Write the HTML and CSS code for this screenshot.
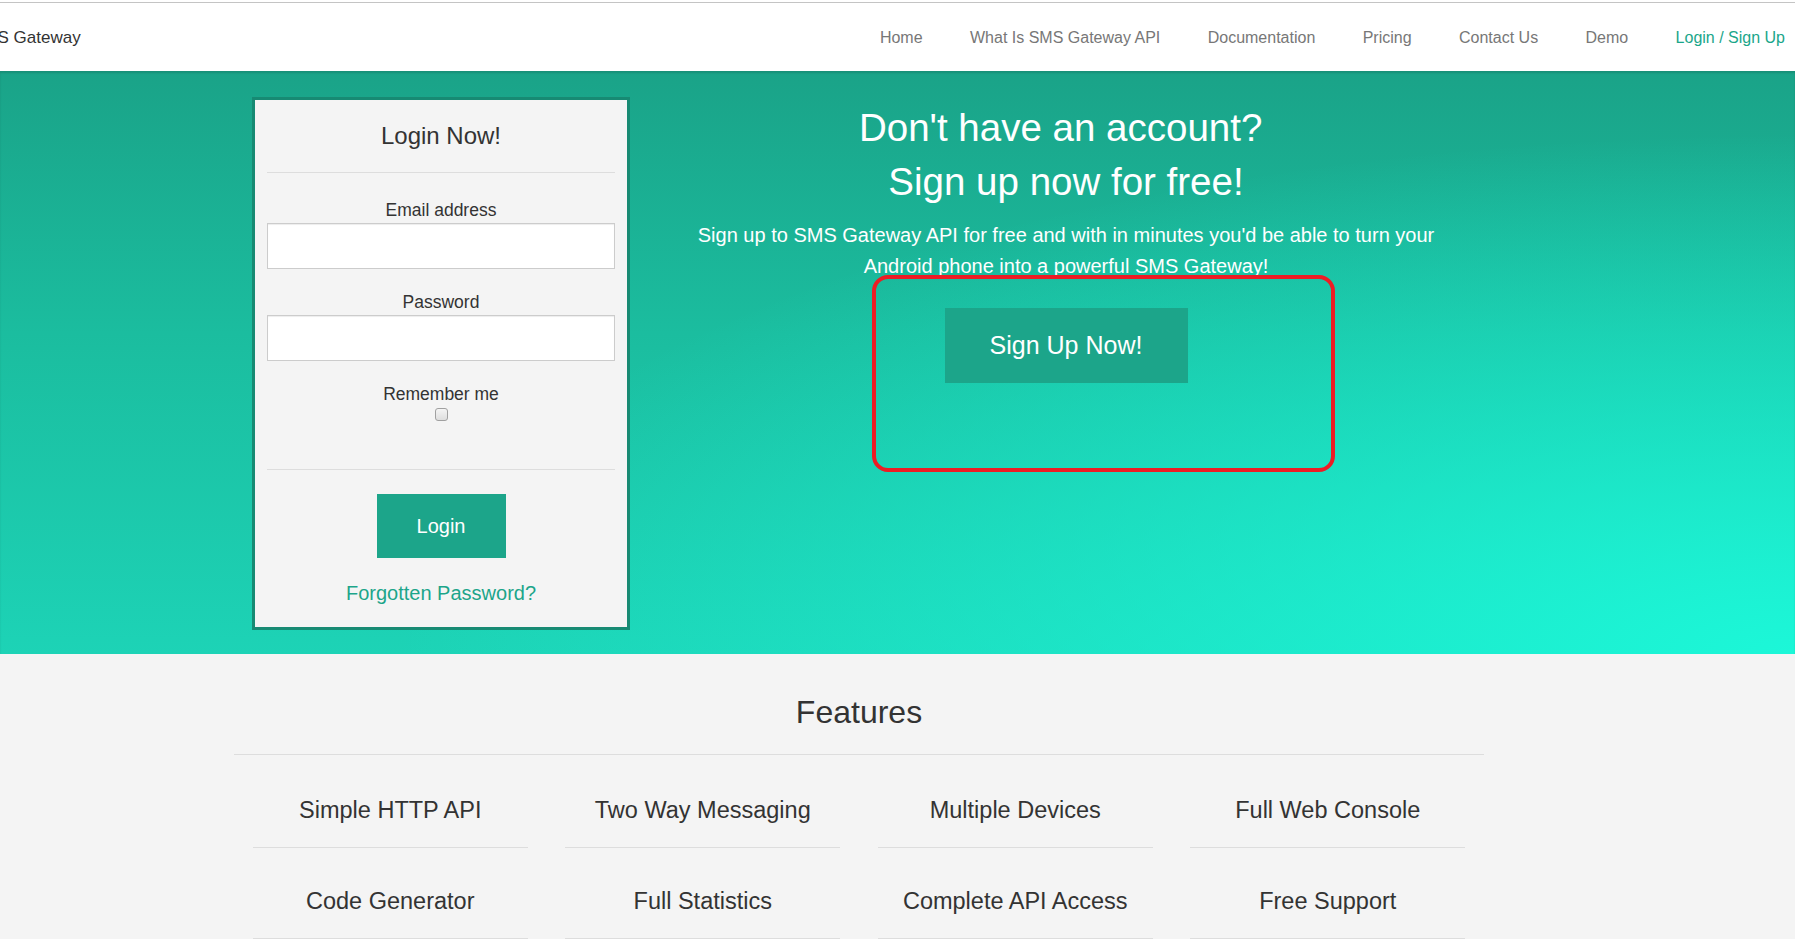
FILE: index.html
```html
<!DOCTYPE html>
<html lang="en">
<head>
<meta charset="utf-8">
<title>SMS Gateway API - Login</title>
<link rel="stylesheet" href="styles.css">
</head>
<body>
<div class="topline"></div>
<header class="navbar">
  <a class="brand" href="#">SMS Gateway</a>
  <nav class="menu">
    <ul class="menu-list">
      <li><a class="menu-link" href="#">Home</a></li>
      <li><a class="menu-link" href="#">What Is SMS Gateway API</a></li>
      <li><a class="menu-link" href="#">Documentation</a></li>
      <li><a class="menu-link" href="#">Pricing</a></li>
      <li><a class="menu-link" href="#">Contact Us</a></li>
      <li><a class="menu-link" href="#">Demo</a></li>
      <li><a class="menu-link active" href="#">Login / Sign Up</a></li>
    </ul>
  </nav>
</header>

<section class="hero">
  <div class="hero-inner">
    <form class="login-card">
      <h3 class="card-title">Login Now!</h3>
      <hr class="card-rule">
      <div class="field first">
        <label class="field-label">Email address</label>
        <input class="text-input" type="email">
      </div>
      <div class="field">
        <label class="field-label">Password</label>
        <input class="text-input" type="password">
      </div>
      <div class="field">
        <label class="field-label">Remember me</label>
        <input class="check" type="checkbox">
      </div>
      <hr class="card-rule lower">
      <button class="btn-login" type="button">Login</button>
      <a class="forgot" href="#">Forgotten Password?</a>
    </form>
    <div class="signup">
      <h1 class="signup-title">Don't have an account?&nbsp;<br>Sign up now for free!</h1>
      <p class="signup-text">Sign up to SMS Gateway API for free and with in minutes you'd be able to turn your Android phone into a powerful SMS Gateway!</p>
      <a class="btn-signup" href="#">Sign Up Now!</a>
    </div>
  </div>
  <div class="annotation"></div>
</section>

<section class="features">
  <div class="container">
    <h2 class="features-title">Features</h2>
    <hr class="features-rule">
    <ul class="feature-grid">
      <li class="feature"><span class="feature-name">Simple HTTP API</span></li>
      <li class="feature"><span class="feature-name">Two Way Messaging</span></li>
      <li class="feature"><span class="feature-name">Multiple Devices</span></li>
      <li class="feature"><span class="feature-name">Full Web Console</span></li>
      <li class="feature"><span class="feature-name">Code Generator</span></li>
      <li class="feature"><span class="feature-name">Full Statistics</span></li>
      <li class="feature"><span class="feature-name">Complete API Access</span></li>
      <li class="feature"><span class="feature-name">Free Support</span></li>
    </ul>
  </div>
</section>
</body>
</html>
```
FILE: styles.css
```css
html, body {
  margin: 0;
  padding: 0;
  overflow: hidden;
}
body {
  font-family: "Liberation Sans", Arial, Helvetica, sans-serif;
  color: #333;
  background: #f4f4f4;
}

.topline {
  height: 2px;
  background: #fff;
}

.navbar {
  box-sizing: border-box;
  height: 69px;
  padding-top: 2px;
  border-top: 1px solid #c4c4c4;
  background: #fff;
  display: flex;
  align-items: center;
}
.brand {
  margin-left: -28px;
  font-size: 17px;
  color: #333;
  text-decoration: none;
  white-space: nowrap;
}
.menu {
  margin-left: auto;
  padding-right: 10px;
}
.menu-list {
  list-style: none;
  margin: 0;
  padding: 0;
  display: flex;
  gap: 47.4px;
}
.menu-link {
  font-size: 16px;
  color: #777;
  text-decoration: none;
  white-space: nowrap;
}
.menu-link.active {
  color: #1aa68a;
}

.hero {
  position: relative;
  padding: 26px 0 24px;
  background:
    radial-gradient(ellipse 1400px 520px at 100% 100%, rgba(28, 247, 216, 1) 0%, rgba(28, 247, 216, 0) 100%),
    linear-gradient(180deg, #1aa388 0%, #1bbd9f 45%, #1dd3b6 100%);
  box-shadow: inset 0 2px 2px rgba(0, 0, 0, 0.12);
}
.hero-inner {
  margin-left: 234px;
  width: 1250px;
  display: flex;
  align-items: flex-start;
}

.login-card {
  box-sizing: border-box;
  width: 378px;
  margin: 0 0 0 18px;
  padding: 22px 12px 22.5px;
  border: 3px solid #178a73;
  background: #f4f4f4;
  text-align: center;
}
.card-title {
  margin: 0;
  font-size: 24px;
  line-height: 28px;
  font-weight: normal;
  color: #333;
}
.card-rule {
  margin: 22px 0 0;
  height: 0;
  border: 0;
  border-top: 1px solid #dddddd;
}
.card-rule.lower {
  margin-top: 48px;
}
.field {
  margin-top: 23px;
}
.field.first {
  margin-top: 27px;
}
.field-label {
  display: block;
  margin-bottom: 2px;
  font-size: 17.5px;
  line-height: 21px;
  color: #333;
}
.text-input {
  display: block;
  box-sizing: border-box;
  width: 100%;
  height: 46px;
  margin: 0;
  border: 1px solid #cccccc;
  background: #fff;
  box-shadow: inset 0 1px 1px rgba(0, 0, 0, 0.075);
}
.check {
  appearance: none;
  -webkit-appearance: none;
  display: block;
  box-sizing: border-box;
  width: 13px;
  height: 13px;
  margin: 3px auto 0;
  border: 1px solid #a0a0a0;
  border-radius: 3px;
  background: linear-gradient(#f4f4f4, #dedede);
}
.btn-login {
  display: block;
  width: 129px;
  height: 64px;
  margin: 24px auto 0;
  border: 0;
  padding: 0;
  background: #1ca58a;
  color: #fff;
  font-family: inherit;
  font-size: 20px;
}
.forgot {
  display: block;
  margin-top: 23.5px;
  font-size: 20px;
  line-height: 23px;
  color: #1ca58a;
  text-decoration: none;
}

.signup {
  flex: 1;
  margin-left: 18px;
  text-align: center;
  color: #fff;
}
.signup-title {
  margin: 3.7px 0 0;
  font-size: 38.5px;
  line-height: 54px;
  font-weight: normal;
}
.signup-text {
  max-width: 780px;
  margin: 11px auto 0;
  font-size: 20px;
  line-height: 31px;
}
.btn-signup {
  display: block;
  width: 243px;
  height: 75px;
  margin: 26.4px auto 0;
  background: #1ca58a;
  color: #fff;
  font-size: 25px;
  line-height: 75px;
  text-decoration: none;
}

.annotation {
  position: absolute;
  left: 872px;
  top: 204px;
  box-sizing: border-box;
  width: 463px;
  height: 197px;
  border: 4px solid #ed1c24;
  border-radius: 16px;
}

.features {
  padding-top: 40px;
  background: #f4f4f4;
}
.container {
  margin-left: 234px;
  width: 1250px;
}
.features-title {
  margin: 0;
  font-size: 32px;
  line-height: 36px;
  font-weight: normal;
  text-align: center;
  color: #333;
}
.features-rule {
  margin: 24px 0 0;
  height: 0;
  border: 0;
  border-top: 1px solid #dddddd;
}
.feature-grid {
  list-style: none;
  margin: 2px 0 0;
  padding: 0;
  display: grid;
  grid-template-columns: repeat(4, 1fr);
}
.feature {
  padding: 0 18.75px;
}
.feature-name {
  display: block;
  padding: 40px 0 23px;
  font-size: 23.5px;
  line-height: 27px;
  text-align: center;
  color: #333;
  border-bottom: 1px solid #dddddd;
}
```
